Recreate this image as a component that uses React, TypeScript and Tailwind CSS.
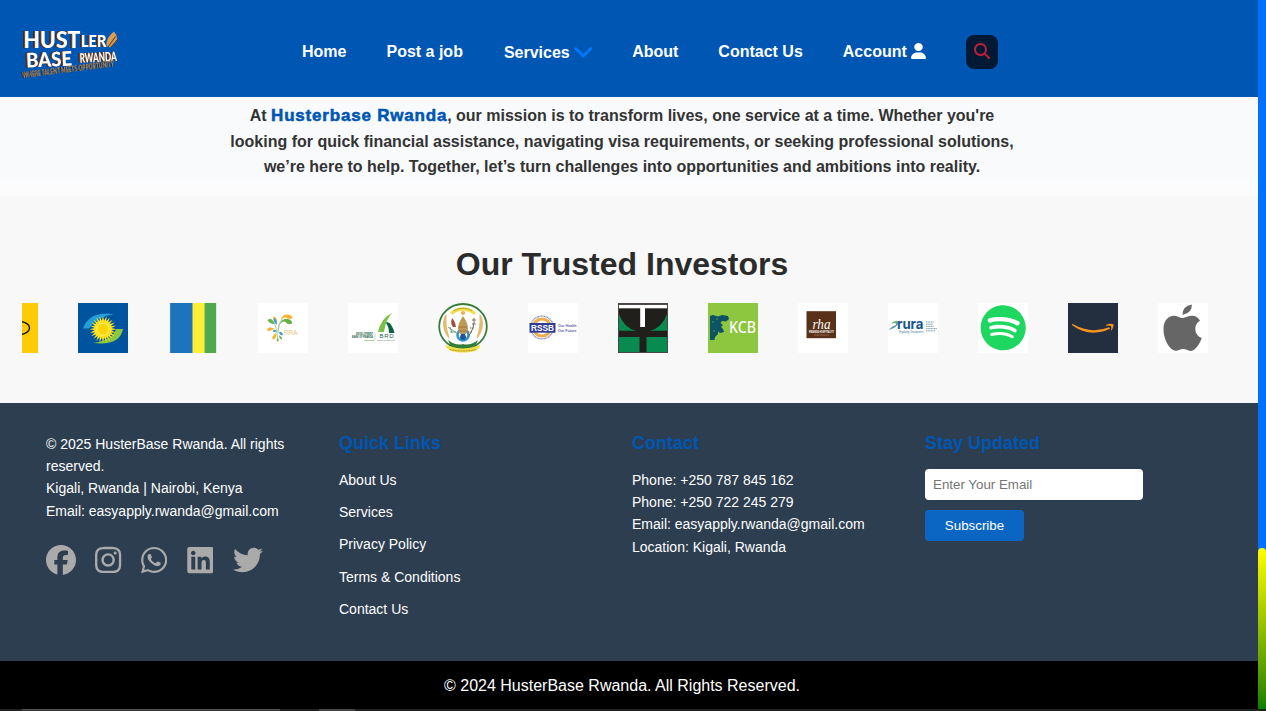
import React from "react";
import { FaFacebook, FaInstagram, FaWhatsapp, FaLinkedin, FaTwitter, FaSpotify, FaUser, FaMagnifyingGlass } from "react-icons/fa6";

const font = "Liberation Sans, sans-serif";

function BrandLogo() {
  return (
    <svg className="overflow-visible" width="100" height="52" viewBox="0 0 100 52" fontFamily="Lato, sans-serif" fontWeight="900">
      <g fill="#fff" className="[filter:drop-shadow(-1px_0_0_#7a4a2c)_drop-shadow(-1px_0.5px_0_#3c2a26)]">
        <text x="3.5" y="18.6" fontSize="22.5" textLength="57" lengthAdjust="spacingAndGlyphs">HUST</text>
        <text x="61" y="18" fontSize="17" textLength="25.5" lengthAdjust="spacingAndGlyphs">LER</text>
        <text x="6.5" y="38.5" fontSize="20" textLength="46" lengthAdjust="spacingAndGlyphs" transform="rotate(-2.5 6.5 38.5)">BASE</text>
        <text x="60" y="33.8" fontSize="13" textLength="37" lengthAdjust="spacingAndGlyphs" transform="rotate(-3 60.5 34)">RWANDA</text>
      </g>
      <path d="M86.5 17 Q86 8 94 2.5 Q99 9 96 13 L90 18.5Z" fill="#d99c50" />
      <path d="M88 18 L95.5 7.5 M91 18 L97 11" stroke="#5b351d" strokeWidth="1" />
      <text x="3" y="48.8" fontSize="6.8" fill="#c8965e" fontWeight="700" textLength="92" lengthAdjust="spacingAndGlyphs" transform="rotate(-7.2 3 49)" className="[filter:drop-shadow(-0.8px_0.6px_0_#241915)]">WHERE TALENT MEETS OPPORTUNITY</text>
    </svg>
  );
}

function Tile({ children }: { children: React.ReactNode }) {
  return (
    <svg className="shrink-0 overflow-visible" width="50" height="50" viewBox="0 0 50 50">
      {children}
    </svg>
  );
}

const White = () => <rect width="50" height="50" fill="#fff" />;

const rays = Array.from({ length: 48 }, (_, i) => {
  const a = (i * Math.PI) / 24;
  const r = i % 2 ? 8.5 : 13.5;
  return `${(25 + r * Math.cos(a)).toFixed(1)},${(26.2 + r * Math.sin(a)).toFixed(1)}`;
}).join(" ");

function Investors() {
  return (
    <div className="ml-[22px] flex h-[50px] gap-10">
      <svg className="shrink-0" width="16" height="50" viewBox="0 0 16 50">
        <rect width="16" height="50" fill="#ffcb05" />
        <ellipse cx="-3" cy="25" rx="10.5" ry="6.5" fill="none" stroke="#111" strokeWidth="1.3" />
      </svg>
      <Tile>
        <rect width="50" height="50" fill="#00539f" />
        <path d="M5 25.5 Q11 8 36 11 Q18 14 11 25.5Z" fill="#239fdb" />
        <path d="M45 26 Q42 43 15 40 Q35 37 38 26Z" fill="#8dc63f" />
        <polygon points={rays} fill="#fde021" />
        <circle cx="25" cy="26.2" r="6" fill="#f8d60a" stroke="#fff27a" strokeWidth=".8" />
      </Tile>
      <Tile>
        <rect x="1.6" width="47" height="50" fill="#cfe3d8" />
        <rect x="2.2" width="22" height="50" fill="#1e73be" />
        <rect x="24.2" width="1" height="50" fill="#8aa97a" />
        <rect x="25" width="11.2" height="50" fill="#fff033" />
        <rect x="36.2" width="1" height="50" fill="#a0c840" />
        <rect x="37" width="11" height="50" fill="#50a850" />
      </Tile>
      <Tile>
        <White />
        <g fill="#f9b233">
          <path d="M23 17 Q24 11 30 11.5 Q34.5 12 34.5 15 Q31 17 28 14.5 Q25 14 23 17Z" />
          <path d="M19 20 Q14 17 15.5 13.5 Q19.5 14 19 20Z" />
          <path d="M16 25.5 Q13 29 9 27.5 Q9.5 23 16 25.5Z" />
          <path d="M18 30 Q19 36 14.5 36.5 Q13.5 33 18 30Z" />
        </g>
        <g fill="#66b345">
          <path d="M22 20 Q25 15 30 16 Q34.5 17 34 20.5 Q30 22.5 27.5 19 Q25 17.5 22 20Z" />
          <path d="M17 21 Q12 21.5 9.5 17 Q14 13.5 17 21Z" />
          <path d="M21 32 Q25 35 24 36.5 Q21 36 21 32Z" />
          <path d="M19.5 34 Q21.5 37 19.8 39 Q18 37 19.5 34Z" />
        </g>
        <g fill="#3c9bd6">
          <path d="M19 22 Q15 19 15.8 15 Q19 16 19 22Z" />
          <ellipse cx="16.5" cy="28" rx="1.8" ry="1" />
          <ellipse cx="23" cy="30.5" rx="2.2" ry="1.2" transform="rotate(40 23 30.5)" />
        </g>
        <path d="M19.5 36 Q19 25 16 20 M20 30 Q20 21 24 16 M20 28 Q20.5 21 24 19 M19 29 L15 25.5" fill="none" stroke="#97bd82" strokeWidth=".8" />
        <text x="25.5" y="32.3" fontFamily={font} fontSize="7" fill="#efc77c" textLength="14" lengthAdjust="spacingAndGlyphs">RRA</text>
      </Tile>
      <Tile>
        <White />
        <path d="M30 29 Q33 15 44 10 Q38 16 36 29Z" fill="#7ac143" />
        <path d="M39 19 Q44 20 46.5 30 L41 30 Q41 24 38 20Z" fill="#0b6140" />
        <text x="31.5" y="35" fontFamily={font} fontSize="6" fill="#176547" textLength="14">BRD</text>
        <text x="8" y="32.3" fontFamily={font} fontSize="2.8" fontWeight="700" fill="#176547" textLength="17" lengthAdjust="spacingAndGlyphs">DEVELOPMENT</text>
        <text x="4" y="35.3" fontFamily={font} fontSize="2.8" fontWeight="700" fill="#176547" textLength="21" lengthAdjust="spacingAndGlyphs">BANK OF RWANDA</text>
        <path d="M27 30V38" stroke="#9bbb9b" strokeWidth=".5" />
        <path d="M16 37.5h10" stroke="#9acb72" strokeWidth=".8" />
        <text x="29" y="38" fontFamily={font} fontSize="2.4" fill="#3d7358" textLength="18" lengthAdjust="spacingAndGlyphs">Think.Invest.Live</text>
      </Tile>
      <Tile>
        <ellipse cx="25" cy="23.5" rx="23.8" ry="22.5" fill="#fff" stroke="#347d3b" strokeWidth="1.8" />
        <path d="M13 10.5 Q25 1.5 37 10.5" fill="none" stroke="#f3dc46" strokeWidth="3.2" />
        <path d="M16 7.5 Q25 3 34 7.5" fill="none" stroke="#6d672d" strokeWidth=".8" strokeDasharray="1 .6" />
        <circle cx="25" cy="10" r="2.1" fill="#f0b04b" />
        <path d="M8 12 Q2 23 11 35 Q7 24 8 12 M42 12 Q48 23 39 35 Q43 24 42 12" fill="#e4ba70" stroke="#e4ba70" strokeWidth="1.2" />
        <circle cx="25" cy="32" r="5.5" fill="#fff" stroke="#3196d6" strokeWidth="2.6" />
        <path d="M25 13 Q20 20 20 26 L22 31H28L30 26Q30 20 25 13Z" fill="#bd9a57" />
        <path d="M21 24h8M21 28h8" stroke="#8e6a32" strokeWidth=".7" />
        <path d="M22 34a3 3 0 0 0 6 0l-1-3h-4z" fill="#245394" />
        <path d="M14 15 Q12 21 15 24 L18 24 Q17 18 14 15Z" fill="#a05135" />
        <path d="M10 24 L20 31 M12 29h6 M12 24l2 6" stroke="#5d8a68" strokeWidth=".8" />
        <path d="M36 15 Q37 25 30 34" stroke="#477447" strokeWidth="1" fill="none" />
        <path d="M34 17h4M34 21h4M32 25h4M30 29h4" stroke="#a34440" strokeWidth="1.2" strokeDasharray="1.4 1" />
        <path d="M10 37 Q18 43 25 41 Q32 43 40 37 L37 44 Q25 47 13 44Z" fill="#347d3b" />
        <path d="M7.5 42 Q9 49.5 25 49.5 Q41 49.5 42.5 42 L37 43.5 Q25 47.5 13 43.5Z" fill="#f2df45" />
        <path d="M12 46.5 Q25 49.5 38 46.5" fill="none" stroke="#806b20" strokeWidth=".8" strokeDasharray="1 .6" />
      </Tile>
      <Tile>
        <White />
        <circle cx="14" cy="24.5" r="11.4" fill="none" stroke="#7f87ba" strokeWidth="1.4" strokeDasharray="1 .5" />
        <circle cx="14" cy="24.5" r="8.6" fill="#fff" stroke="#efad4e" strokeWidth="3" />
        <rect x="1.5" y="20" width="26" height="9.7" fill="#303b94" />
        <text x="3" y="28.3" fontFamily={font} fontWeight="700" fontSize="9.5" fill="#fff" textLength="23" lengthAdjust="spacingAndGlyphs">RSSB</text>
        <g fontFamily={font} fontWeight="700" fontSize="3.5" fill="#5d68a5">
          <text x="30" y="24" textLength="18.5" lengthAdjust="spacingAndGlyphs">Our Health</text>
          <text x="30" y="29" textLength="18.5" lengthAdjust="spacingAndGlyphs">Our Future</text>
        </g>
      </Tile>
      <Tile>
        <rect width="50" height="50" fill="#211f1b" />
        <rect x=".5" y=".5" width="49" height="49" fill="none" stroke="#4c4744" strokeWidth="1" />
        <rect x="1" y="1.8" width="48" height="3.5" fill="#fff" />
        <rect x="22.2" y="2" width="4.8" height="22" fill="#fff" />
        <path d="M1 11 Q6 25 18 27.8H1Z M49 11 Q44 25 32 27.8H49Z M1 34H21.5V49H1Z M28.5 34H49V49H28.5Z" fill="#078b50" />
      </Tile>
      <Tile>
        <rect width="50" height="50" fill="#8dc63f" />
        <path d="M2 13 L5 12 L10 13.5 L14 12 L20 13 L21 16 L18 18.5 L14 18 L12.5 20 L15 22 L13 24 L15 26 L16 29 L12 30 L10 28.5 L10 31 L7 34 L6.5 37 L2 37Z" fill="#0c5366" />
        <path d="M4 19h2M8 16h2M5 28h2" stroke="#8dc63f" strokeWidth=".6" />
        <text x="21" y="30" fontFamily="Noto Sans, sans-serif" fontWeight="500" fontSize="15.5" fill="#fff" textLength="27" lengthAdjust="spacingAndGlyphs">KCB</text>
      </Tile>
      <Tile>
        <White />
        <rect x="8.5" y="8.2" width="29.5" height="27" fill="#593018" />
        <text x="14.5" y="25.5" fontFamily="Liberation Serif, serif" fontStyle="italic" fontSize="15" fill="#fff" textLength="18" lengthAdjust="spacingAndGlyphs">rha</text>
        <text x="11" y="30.3" fontFamily={font} fontWeight="700" fontSize="2.8" fill="#fff" textLength="25" lengthAdjust="spacingAndGlyphs">RWANDA HOSPITALITY</text>
        <path d="M16 32h15" stroke="#a9866b" strokeWidth=".6" />
      </Tile>
      <Tile>
        <White />
        <path d="M0.5 27 Q5 22.5 8 22 Q9 19 4 20.5 Q10 15.5 10 20 Q10 24 0.5 27" fill="#4b9fad" />
        <path d="M4 20 Q9 17 10 21" stroke="#8abc40" fill="none" />
        <text x="9" y="25.5" fontFamily="Inter, sans-serif" fontWeight="700" fontSize="14.5" fill="#15568e" textLength="26.5" lengthAdjust="spacingAndGlyphs">rura</text>
        <text x="11" y="30" fontFamily={font} fontStyle="italic" fontSize="3" fill="#387092" textLength="24" lengthAdjust="spacingAndGlyphs">Regulating, Development</text>
        <path d="M38 19h8M38 21.2h7M38 23.4h8M38 25.6h11M38 27.8h9" stroke="#809bad" strokeWidth="1" strokeDasharray="1.2 .4" />
      </Tile>
      <Tile>
        <White />
        <FaSpotify x={2} y={1.5} size={46.5} color="#1ed760" />
      </Tile>
      <Tile>
        <rect width="50" height="50" fill="#232f3e" />
        <path d="M4.2 20.8 Q23 31.5 41 24.2 L42 25.8 Q22 35 4.2 22.2Z" fill="#f7941d" />
        <path d="M38 22 Q42 20 45.5 21.2 Q46 24 43 28 Q43.5 24 43 23 Q41 22.2 38 22.8Z" fill="#f7941d" />
      </Tile>
      <Tile>
        <White />
        <g fill="#666">
          <path d="M24.5 12 Q24.5 3 33.8 1.5 Q34.5 9.5 24.5 12Z" />
          <path d="M25 15 C29 14 31 12.6 34.5 12.8 Q39 13 42 17.4 C35 22 36 32 43.8 35 Q41 42.5 36.5 46.5 Q33.5 49 29.5 47 Q25 45 21 47 Q17 49 13.5 46 C8 41 5.5 33 5.5 26 C5.5 17 11 12.8 16 12.8 C20 13 22 15 25 15Z" />
        </g>
      </Tile>
    </div>
  );
}

const links = ["About Us", "Services", "Privacy Policy", "Terms & Conditions", "Contact Us"];

function ColumnTitle({ children }: { children: React.ReactNode }) {
  return <h4 className="pt-px text-[18px] leading-[29px] font-bold text-[#0056b3]">{children}</h4>;
}

export default function App() {
  return (
    <div className="flex h-[711px] w-[1266px] flex-col overflow-hidden bg-[#202020] font-['Liberation_Sans',sans-serif]">
      <div className="flex h-[709px]">
        <div className="flex w-[1258px] flex-col">
          <header className="flex h-[97px] bg-[#0056b3] text-white">
            <div className="w-[302px] pt-[29px] pl-5">
              <BrandLogo />
            </div>
            <nav className="flex h-[103px] items-center gap-10 text-base font-bold whitespace-nowrap">
              <a>Home</a>
              <a>Post a job</a>
              <a className="flex items-center gap-1 pt-[2px] pl-px">
                Services
                <svg width="18.4" height="12" viewBox="0 0 18 12" fill="none" stroke="#007bff" strokeWidth="2.5" strokeLinecap="round" strokeLinejoin="round">
                  <path d="M1.5 1.5 L9 9 L16.5 1.5" />
                </svg>
              </a>
              <a>About</a>
              <a>Contact Us</a>
              <a className="flex items-center gap-1">
                Account
                <FaUser className="mb-[2px] h-4 w-[15px]" preserveAspectRatio="none" />
              </a>
              <button className="flex h-[34px] w-8 items-center justify-center rounded-lg bg-[#001a35] pb-[2px] text-[#be1e37]">
                <FaMagnifyingGlass size={16} />
              </button>
            </nav>
          </header>

          <section className="h-[83px] bg-[#f8fafc] pt-[6px]">
            <p className="w-[1244px] text-center text-base leading-[25.6px] font-bold text-[#333]">
              At <strong className="text-[17px] leading-none font-black tracking-[0.8px] text-[#0056b3] [-webkit-text-stroke:0.55px_#0056b3]">Husterbase Rwanda</strong>, our mission is to transform lives, one service at a time. Whether you're
              <br />
              looking for quick financial assistance, navigating visa requirements, or seeking professional solutions,
              <br />
              we’re here to help. Together, let’s turn challenges into opportunities and ambitions into reality.
            </p>
          </section>
          <div className="h-4 bg-[#fcfcfc]" />

          <section className="h-[207px] bg-[#f8f8f8] pt-[43px]">
            <h2 className="mb-[14px] h-[50px] w-[1244px] text-center text-[32px] leading-[50px] font-bold text-[#2b2b2b]">Our Trusted Investors</h2>
            <Investors />
          </section>

          <footer className="grid h-[258px] grid-cols-[293px_293px_293px_1fr] bg-[#2c3e50] pt-[25px] pl-[46px] text-sm leading-[22.4px] text-white">
            <div className="pt-[4.6px]">
              <p>
                © 2025 HusterBase Rwanda. All rights
                <br />
                reserved.
                <br />
                Kigali, Rwanda | Nairobi, Kenya
                <br />
                Email: easyapply.rwanda@gmail.com
              </p>
              <div className="mt-[22.8px] flex items-center gap-[19.4px] text-[30px] text-[#aaa]">
                <FaFacebook />
                <FaInstagram className="w-[26.25px]" />
                <FaWhatsapp className="w-[26.25px]" />
                <FaLinkedin className="w-[26.8px]" />
                <FaTwitter />
              </div>
            </div>
            <div>
              <ColumnTitle>Quick Links</ColumnTitle>
              <ul className="mt-[10.6px] flex flex-col gap-[9.97px]">
                {links.map((l) => (
                  <li key={l}>{l}</li>
                ))}
              </ul>
            </div>
            <div>
              <ColumnTitle>Contact</ColumnTitle>
              <p className="mt-[10.6px]">
                Phone: +250 787 845 162
                <br />
                Phone: +250 722 245 279
                <br />
                Email: easyapply.rwanda@gmail.com
                <br />
                Location: Kigali, Rwanda
              </p>
            </div>
            <div>
              <ColumnTitle>Stay Updated</ColumnTitle>
              <input className="mt-[11px] block h-[31px] w-[218px] rounded-[4px] bg-white px-2 text-[13.333px] placeholder:text-[#757575]" placeholder="Enter Your Email" />
              <button className="mt-[10px] block h-[31px] w-[99px] rounded-[4px] bg-[#0a66c2] text-[13.333px] leading-[31px]">Subscribe</button>
            </div>
          </footer>

          <div className="h-12 bg-black pt-px">
            <p className="w-[1244px] text-center text-base leading-[48px] text-white">© 2024 HusterBase Rwanda. All Rights Reserved.</p>
          </div>
        </div>
        <div className="flex w-2 flex-col justify-end bg-[#0070ff]">
          <div className="h-[161px] rounded-t-[4px] bg-linear-to-b from-[#ffff00] to-[#008000]" />
        </div>
      </div>
      <div className="flex h-[2px] pl-[22px]">
        <div className="h-[2px] w-[258px] border-t border-[#555] bg-[#333]" />
        <div className="ml-[39px] h-[2px] w-9 bg-[#444]" />
      </div>
    </div>
  );
}
